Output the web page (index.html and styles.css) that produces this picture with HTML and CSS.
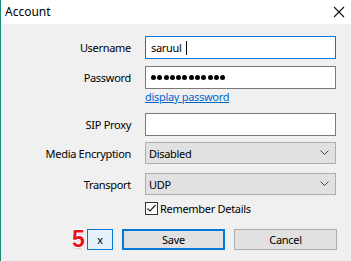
FILE: index.html
```html
<!DOCTYPE html>
<html lang="en">
<head>
    <meta charset="UTF-8">
    <title>Account</title>
    <link rel="stylesheet" href="styles.css">
</head>
<body>
    <div class="window">
        <div class="titlebar">
            <span class="title">Account</span>
            <svg class="close" width="12" height="12" viewBox="0 0 12 12">
                <path d="M1 1 L11 11 M11 1 L1 11" stroke="#111" stroke-width="1.1" fill="none"/>
            </svg>
        </div>

        <div class="form">
            <div class="row">
                <label>Username</label>
                <div class="field focused">saruul <span class="caret"></span></div>
            </div>

            <div class="row row-pass">
                <label>Password</label>
                <div class="field dots">
                    <i></i><i></i><i></i><i></i><i></i><i></i><i></i><i></i><i></i><i></i><i></i><i></i>
                </div>
            </div>

            <div class="row row-link">
                <span></span>
                <a href="#" class="link">display password</a>
            </div>

            <div class="row row-sip">
                <label>SIP Proxy</label>
                <div class="field"></div>
            </div>

            <div class="row row-media">
                <label>Media Encryption</label>
                <div class="select">Disabled
                    <svg class="chev" width="9" height="6" viewBox="0 0 9 6"><path d="M0.5 0.5 L4.5 4.5 L8.5 0.5" stroke="#444" fill="none"/></svg>
                </div>
            </div>

            <div class="row row-transport">
                <label>Transport</label>
                <div class="select">UDP
                    <svg class="chev" width="9" height="6" viewBox="0 0 9 6"><path d="M0.5 0.5 L4.5 4.5 L8.5 0.5" stroke="#444" fill="none"/></svg>
                </div>
            </div>

            <div class="row row-check">
                <span></span>
                <div class="check">
                    <span class="box">
                        <svg width="11" height="11" viewBox="0 0 11 11"><path d="M1.5 5.5 L4 8 L9.5 2" stroke="#222" stroke-width="1.2" fill="none"/></svg>
                    </span>
                    Remember Details
                </div>
            </div>

            <div class="buttons">
                <span class="badge">5</span>
                <button class="btn btn-x">x</button>
                <button class="btn btn-save">Save</button>
                <button class="btn btn-cancel">Cancel</button>
            </div>
        </div>
    </div>
</body>
</html>
```

FILE: styles.css
```css
body {
    margin: 0;
    font-family: "Noto Sans", sans-serif;
    font-size: 11px;
    letter-spacing: -0.3px;
    color: #000;
}
.window {
    width: 350px;
    height: 261px;
    border-left: 1px solid #1a8a78;
    background: #f0f0f0;
}
.titlebar {
    height: 24px;
    background: #fff;
    display: flex;
    align-items: center;
    justify-content: space-between;
    padding: 0 6px 0 4px;
}
.title {
    font-size: 12px;
    letter-spacing: 0;
    margin-top: -2px;
}
.close {
    margin-top: -1px;
}
.form {
    padding-top: 12px;
}
.row {
    display: grid;
    grid-template-columns: 130px 191px;
    column-gap: 14px;
    align-items: center;
    height: 23px;
}
.row label {
    text-align: right;
}
.row-pass { margin-top: 7px; }
.row-link { margin-top: 1px; height: 14px; }
.row-sip { margin-top: 9px; }
.row-media { margin-top: 6px; height: 22px; }
.row-transport { margin-top: 9px; height: 22px; }
.row-check { margin-top: 6px; height: 14px; }

.field {
    height: 23px;
    box-sizing: border-box;
    background: #fff;
    border: 1px solid #7a7a7a;
    padding: 0 5px;
    display: flex;
    align-items: center;
}
.focused {
    border-color: #0078d7;
}
.caret {
    display: inline-block;
    width: 1px;
    height: 14px;
    background: #000;
    margin-left: 4px;
}
.dots {
    gap: 1.3px;
}
.dots i {
    width: 5px;
    height: 5px;
    border-radius: 50%;
    background: #000;
}
.link {
    color: #0066cc;
    text-decoration: underline;
    line-height: 14px;
}
.select {
    height: 22px;
    box-sizing: border-box;
    background: #e1e1e1;
    border: 1px solid #adadad;
    padding: 0 3px;
    display: flex;
    align-items: center;
    justify-content: space-between;
}
.chev {
    margin-right: 3px;
}
.check {
    display: flex;
    align-items: center;
    gap: 2px;
}
.box {
    width: 13px;
    height: 13px;
    box-sizing: border-box;
    border: 1px solid #333;
    background: #fff;
    display: flex;
    align-items: center;
    justify-content: center;
}
.buttons {
    display: flex;
    align-items: center;
    margin-top: 14px;
    padding-left: 71px;
    height: 21px;
}
.badge {
    width: 15px;
    font-family: "Liberation Sans", sans-serif;
    font-weight: bold;
    font-size: 23px;
    letter-spacing: 0;
    line-height: 21px;
    color: #e8141a;
    text-shadow: -1px -1px 0 #fff, 1px -1px 0 #fff, -1px 1px 0 #fff, 1px 1px 0 #fff, 0 1px 2px rgba(0,0,0,0.5);
}
.btn {
    font-family: "Noto Sans", sans-serif;
    font-size: 11px;
    letter-spacing: -0.3px;
    height: 21px;
    box-sizing: border-box;
    background: #e1e1e1;
    border: 1px solid #adadad;
    padding: 0;
    color: #000;
}
.btn-x {
    width: 26px;
    background: #e5f1fb;
    border-color: #0078d7;
}
.btn-save {
    width: 103px;
    margin-left: 9px;
    border: 2px solid #0078d7;
}
.btn-cancel {
    width: 103px;
    margin-left: 9px;
}
```
